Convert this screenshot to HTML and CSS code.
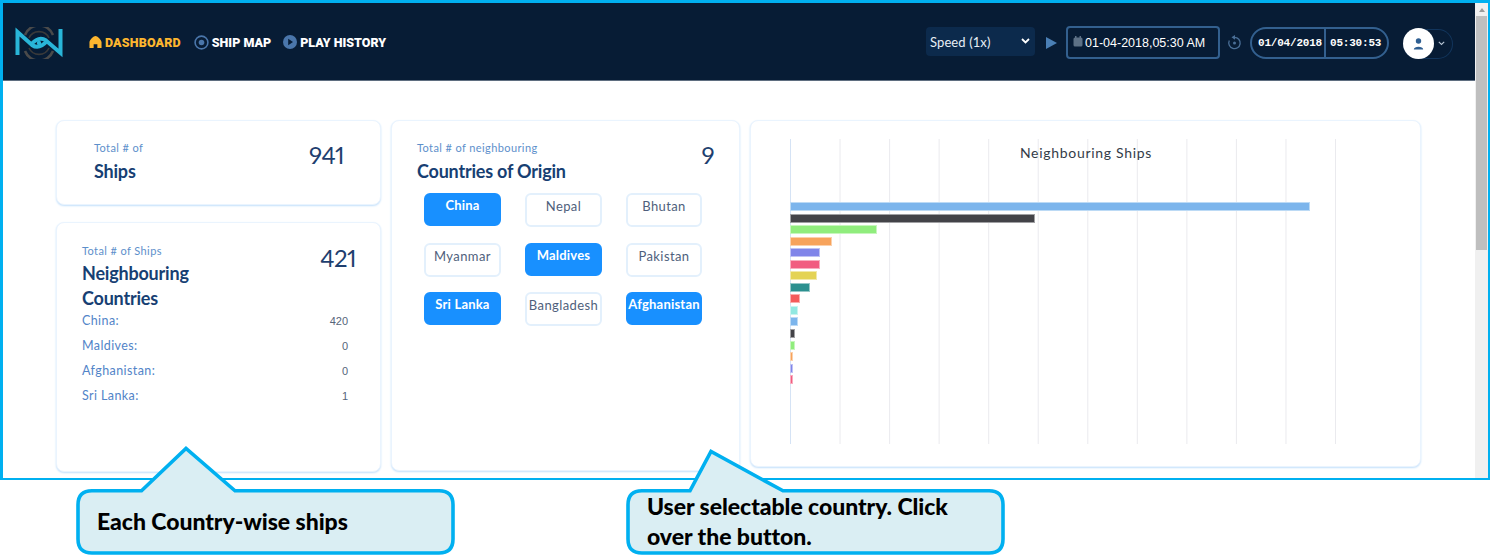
FILE: index.html
```html
<!DOCTYPE html>
<html lang="en">
<head>
<meta charset="utf-8">
<title>Dashboard</title>
<link rel="stylesheet" href="styles.css">
</head>
<body>
<div class="frame">
  <div class="app">
    <header class="topbar">
      <svg class="logo" width="48" height="32" viewBox="0 0 48 32">
        <path d="M10 8A15 15 0 0 1 38 8M10 24A15 15 0 0 0 38 24" fill="none" stroke="#4a4a4a" stroke-width="2.6"/>
        <path d="M14 11A11 11 0 0 1 34 11M14 21A11 11 0 0 0 34 21" fill="none" stroke="#3a3a3a" stroke-width="1.6"/>
        <path d="M2.500 28V5L17 18Q24 23 32 14" fill="none" stroke="#29b5d8" stroke-width="4"/>
        <path d="M45.500 2V26L31 13.500Q24 8.500 16 17.500" fill="none" stroke="#29b5d8" stroke-width="4"/>
        <circle cx="24" cy="16" r="2.200" fill="#29b5d8"/>
      </svg>
      <nav class="nav">
        <a class="nav-item active">
          <svg width="13" height="14" viewBox="0 0 14 14"><path d="M7 0.5C9 0.5 13 4 13.5 7V13.5H9V9.5H5V13.5H0.5V7C1 4 5 0.5 7 0.5Z" fill="#fdb62f"/></svg>
          DASHBOARD
        </a>
        <a class="nav-item">
          <svg width="15" height="15" viewBox="0 0 15 15"><circle cx="7.5" cy="7.5" r="6.4" fill="none" stroke="#4a76ab" stroke-width="1.6"/><circle cx="7.5" cy="7.5" r="2.8" fill="#4a76ab"/></svg>
          SHIP MAP
        </a>
        <a class="nav-item">
          <svg width="14" height="14" viewBox="0 0 14 14"><circle cx="7" cy="7" r="7" fill="#4a76ab"/><path d="M5.2 3.8L10 7L5.2 10.2Z" fill="#071c35"/></svg>
          PLAY HISTORY
        </a>
      </nav>
      <div class="controls">
        <div class="speed">
          <span>Speed (1x)</span>
          <svg width="9" height="6" viewBox="0 0 9 6"><path d="M1 1L4.500 4.500L8 1" fill="none" stroke="#fff" stroke-width="1.800"/></svg>
        </div>
        <svg class="play" width="11" height="12" viewBox="0 0 11 12"><path d="M0 0L11 6L0 12Z" fill="#4a7fb5"/></svg>
        <div class="datebox">
          <svg width="10" height="11" viewBox="0 0 10 11"><rect x="0.500" y="1.500" width="9" height="9" rx="1.500" fill="#5d7186"/><rect x="2" y="0" width="1.500" height="2.500" fill="#5d7186"/><rect x="6.500" y="0" width="1.500" height="2.500" fill="#5d7186"/></svg>
          <span>01-04-2018,05:30 AM</span>
        </div>
        <svg class="reset" width="15" height="15" viewBox="0 0 15 15"><path d="M7.500 2.300A5.700 5.700 0 1 1 2.300 5.600" fill="none" stroke="#4a6f97" stroke-width="1.300"/><path d="M8 0L4.500 2.300L8 4.700Z" fill="#4a6f97"/><circle cx="7.500" cy="8" r="1.500" fill="#4a6f97"/></svg>
        <div class="clock">
          <span class="clock-date">01/04/2018</span>
          <span class="clock-time">05:30:53</span>
        </div>
        <div class="user">
          <span class="avatar">
            <svg width="11" height="12" viewBox="0 0 11 12"><circle cx="5.500" cy="3" r="2.700" fill="#2f5f92"/><path d="M0.800 11.500C0.800 7.800 10.200 7.800 10.200 11.500Z" fill="#2f5f92"/></svg>
          </span>
          <svg class="caret" width="7" height="5" viewBox="0 0 7 5"><path d="M0.800 0.800L3.500 3.500L6.200 0.800" fill="none" stroke="#b8c6d6" stroke-width="1.100"/></svg>
        </div>
      </div>
    </header>
    <main class="content">
      <div class="col">
        <section class="card card-ships">
          <div class="card-head">
            <div>
              <p class="eyebrow">Total # of</p>
              <h2 class="title">Ships</h2>
            </div>
            <div class="count">941</div>
          </div>
        </section>
        <section class="card card-neigh">
          <div class="card-head">
            <div>
              <p class="eyebrow">Total # of Ships</p>
              <h2 class="title">Neighbouring<br>Countries</h2>
            </div>
            <div class="count">421</div>
          </div>
          <ul class="stats">
            <li><span>China:</span><b>420</b></li>
            <li><span>Maldives:</span><b>0</b></li>
            <li><span>Afghanistan:</span><b>0</b></li>
            <li><span>Sri Lanka:</span><b>1</b></li>
          </ul>
        </section>
      </div>
      <section class="card card-origin">
        <div class="card-head">
          <div>
            <p class="eyebrow">Total # of neighbouring</p>
            <h2 class="title">Countries of Origin</h2>
          </div>
          <div class="count">9</div>
        </div>
        <div class="countries">
          <button class="chip on">China</button>
          <button class="chip">Nepal</button>
          <button class="chip">Bhutan</button>
          <button class="chip">Myanmar</button>
          <button class="chip on">Maldives</button>
          <button class="chip">Pakistan</button>
          <button class="chip on">Sri Lanka</button>
          <button class="chip">Bangladesh</button>
          <button class="chip on">Afghanistan</button>
        </div>
      </section>
      <section class="card card-chart">
        <div class="plot">
          <h3 class="chart-title">Neighbouring Ships</h3>
          <div class="bars">
            <i class="bar c1" style="width:518px"></i>
            <i class="bar c2" style="width:243px"></i>
            <i class="bar c3" style="width:85px"></i>
            <i class="bar c4" style="width:40px"></i>
            <i class="bar c5" style="width:28px"></i>
            <i class="bar c6" style="width:28px"></i>
            <i class="bar c7" style="width:25px"></i>
            <i class="bar c8" style="width:18px"></i>
            <i class="bar c9" style="width:8px"></i>
            <i class="bar c10" style="width:6px"></i>
            <i class="bar c1" style="width:6px"></i>
            <i class="bar c2" style="width:3px"></i>
            <i class="bar c3" style="width:3px"></i>
            <i class="bar c4" style="width:1px"></i>
            <i class="bar c5" style="width:1px"></i>
            <i class="bar c6" style="width:1px"></i>
          </div>
        </div>
      </section>
    </main>
  </div>
  <div class="scrollbar">
    <span class="arrow"></span>
    <span class="thumb"></span>
  </div>
</div>

<div class="callout callout-a">
  <svg class="callout-shape" width="381" height="111" viewBox="0 0 381 111">
    <path d="M17 45.800H66.500L111 3.500L160 45.800H364Q378 45.800 378 59.800V94Q378 108 364 108H17Q3 108 3 94V59.800Q3 45.800 17 45.800Z" fill="#daeef3" stroke="#00b0f0" stroke-width="3.600"/>
  </svg>
  <p class="callout-text">Each Country-wise ships</p>
</div>
<div class="callout callout-b">
  <svg class="callout-shape" width="381" height="108" viewBox="0 0 381 108">
    <path d="M17 42.800H65L86 3.500L158 42.800H364Q378 42.800 378 56.800V91Q378 105 364 105H17Q3 105 3 91V56.800Q3 42.800 17 42.800Z" fill="#daeef3" stroke="#00b0f0" stroke-width="3.600"/>
  </svg>
  <p class="callout-text">User selectable country. Click<br>over the button.</p>
</div>
</body>
</html>
```

FILE: styles.css
```css
* { box-sizing: border-box; }
html, body { margin: 0; padding: 0; }
body {
  width: 1491px;
  height: 556px;
  overflow: hidden;
  position: relative;
  background: #fff;
  font-family: Lato, "Noto Sans", sans-serif;
}
.frame {
  width: 1490px;
  height: 480px;
  display: flex;
  border-style: solid;
  border-color: #00b0f0;
  border-width: 3px 2px 2px 3px;
}
.app { width: 1472px; display: flex; flex-direction: column; }

/* top bar */
.topbar {
  height: 78px;
  flex: none;
  display: flex;
  align-items: center;
  background: #071c35;
  border-bottom: 1px solid #5f6e80;
  padding-left: 12px;
  padding-right: 22px;
}
.logo { flex: none; margin-top: 2px; }
.nav { display: flex; gap: 12px; margin-left: 26px; margin-top: 1px; }
.nav-item {
  display: flex;
  align-items: center;
  gap: 3px;
  color: #fff;
  font-family: Roboto, sans-serif;
  font-weight: 900;
  font-size: 12.500px;
}
.nav-item.active { color: #fdb62f; letter-spacing: 0.15px; margin-right: 1px; }
.controls { margin-left: auto; margin-top: 2px; display: flex; align-items: center; }
.speed {
  width: 109px;
  height: 29px;
  background: #0c2a4c;
  border-radius: 4px;
  display: flex;
  align-items: center;
  justify-content: space-between;
  padding: 0 5px 0 4px;
  color: #e8eef5;
  font-size: 13px;
  font-weight: 400;
  letter-spacing: 0.1px;
  margin-top: -3px;
}
.speed span { padding-top: 1px; }
.play { margin-left: 11px; }
.datebox {
  width: 154px;
  height: 33px;
  margin-left: 9px;
  border: 2px solid #33608f;
  border-radius: 4px;
  display: flex;
  align-items: center;
  gap: 2px;
  padding-left: 5px;
  color: #fff;
  font-family: "Liberation Sans", sans-serif;
  font-size: 12.500px;
}
.datebox svg { margin-top: -3px; }
.reset { margin-left: 7px; }
.clock {
  width: 139px;
  height: 32px;
  margin-left: 8px;
  border: 2px solid #33608f;
  border-radius: 16px;
  display: flex;
  align-items: center;
  color: #fff;
  font-family: "Liberation Mono", monospace;
  font-weight: 700;
  font-size: 11px;
}
.clock-date { width: 74px; height: 100%; line-height: 28px; padding-left: 6px; border-right: 2px solid #33608f; letter-spacing: -0.2px; }
.clock-time { padding-left: 4px; letter-spacing: -0.2px; }
.user {
  width: 50px;
  height: 30px;
  margin-left: 14px;
  margin-top: 2px;
  border: 1px solid #12355c;
  border-left: 0;
  border-radius: 15px;
  display: flex;
  align-items: center;
  gap: 4px;
}
.avatar {
  width: 31px;
  height: 31px;
  flex: none;
  border-radius: 50%;
  background: #fff;
  display: flex;
  align-items: center;
  justify-content: center;
}

/* page */
.content {
  flex: 1;
  padding: 39px 0 0 53px;
  display: grid;
  grid-template-columns: 325px 349px 671px;
  column-gap: 10px;
  align-items: start;
}
.col { display: flex; flex-direction: column; gap: 17px; }
.card {
  background: #fff;
  border: 1px solid #eaf4fe;
  border-radius: 8px;
  box-shadow: 0 1px 2px #c3e0fb;
}
.card-head { display: flex; justify-content: space-between; align-items: flex-start; }
.eyebrow { margin: 0; font-size: 11px; line-height: 14px; color: #5d8fcb; letter-spacing: 0.4px; }
.title { margin: 0; font-size: 18px; line-height: 25px; font-weight: 700; color: #173f73; letter-spacing: -0.2px; }
.count {
  font-size: 24px;
  line-height: 30px;
  color: #1f3f6f;
  font-variant-numeric: proportional-nums;
  letter-spacing: -0.5px;
  margin-top: -1px;
}

.card-ships { height: 85px; padding: 20px 36px 0 37px; }
.card-ships .title { margin-top: 4px; }
.card-neigh { height: 250px; padding: 21px 24px 0 25px; }
.card-neigh .title { margin-top: 3px; }
.stats { list-style: none; margin: -3px 0 0; padding: 0 8px 0 0; }
.stats li {
  height: 25px;
  display: flex;
  justify-content: space-between;
  align-items: center;
  font-size: 12.500px;
  color: #5284c8;
  letter-spacing: 0.4px;
}
.stats b { font-family: "Liberation Sans", sans-serif; font-weight: 400; font-size: 11px; color: #56657a; letter-spacing: 0; }

.card-origin { height: 351px; padding: 20px 25px 0 25px; }
.card-origin .title { margin-top: 4px; }
.countries {
  display: grid;
  grid-template-columns: 77px 77px 76px;
  grid-auto-rows: 34px;
  column-gap: 24px;
  row-gap: 15.500px;
  margin: 9px 0 0 7px;
}
.chip {
  margin: 0;
  padding: 3px 0 0;
  line-height: 16px;
  height: 34px;
  align-self: start;
  display: flex;
  justify-content: center;
  align-items: flex-start;
  white-space: nowrap;
  background: #fff;
  border: 2px solid #e3f0fc;
  border-radius: 6px;
  color: #4f5f7c;
  font-family: inherit;
  font-size: 13px;
  letter-spacing: 0.4px;
}
.chip.on {
  background: #1890ff;
  border-color: #1890ff;
  color: #fff;
  font-weight: 700;
  letter-spacing: 0.2px;
  height: 33px;
  padding-top: 2px;
}

/* chart */
.card-chart { height: 347px; padding: 18px 0 0 39px; }
.plot {
  width: 592px;
  height: 305px;
  background-image:
    linear-gradient(90deg, #d5e3f5 1px, transparent 1px),
    linear-gradient(90deg, transparent 546px, #fff 546px),
    linear-gradient(90deg, #eaeaee 1px, transparent 1px);
  background-size: 100% 100%, 100% 100%, 49.550px 100%;
  background-repeat: no-repeat, no-repeat, repeat-x;
}
.chart-title {
  margin: 0;
  padding-top: 5px;
  height: 64px;
  text-align: center;
  font-weight: 400;
  font-size: 14px;
  line-height: 17px;
  letter-spacing: 0.7px;
  color: #333c48;
}
.bars { display: flex; flex-direction: column; gap: 4.550px; padding-left: 1px; }
.bar { display: block; height: 7px; }
.c1 { background: #7cb5ec; outline: 1px solid #bcdaf5; }
.c2 { background: #434348; outline: 1px solid #a0a0a3; }
.c3 { background: #90ed7d; outline: 1px solid #c7f6be; }
.c4 { background: #f7a35c; outline: 1px solid #fbd1ad; }
.c5 { background: #8085e9; outline: 1px solid #bfc2f4; }
.c6 { background: #f15c80; outline: 1px solid #f8adbf; }
.c7 { background: #e4d354; outline: 1px solid #f1e9a9; }
.c8 { background: #2b908f; outline: 1px solid #95c7c7; }
.c9 { background: #f45b5b; outline: 1px solid #f9adad; }
.c10 { background: #91e8e1; outline: 1px solid #c8f3f0; }

/* scrollbar */
.scrollbar {
  width: 13px;
  background: #f0f0f0;
  display: flex;
  flex-direction: column;
  align-items: center;
}
.arrow {
  margin-top: 5px;
  width: 0;
  height: 0;
  border-left: 3px solid transparent;
  border-right: 3px solid transparent;
  border-bottom: 4px solid #9a9a9a;
}
.thumb { margin-top: 4px; width: 11px; height: 234px; background: #bfbfbf; }

/* callouts lie over the page */
.callout { position: absolute; width: 381px; }
.callout-shape { position: absolute; left: 0; top: 0; }
.callout-text {
  position: relative;
  margin: 0;
  color: #000;
  font-family: Lato, sans-serif;
  font-weight: 900;
  font-size: 23px;
  line-height: 30px;
  letter-spacing: -0.05px;
}
.callout-a { left: 75px; top: 445px; height: 111px; padding: 61px 0 0 22px; }
.callout-b { left: 625px; top: 448px; height: 108px; padding: 43px 0 0 22px; }
```
